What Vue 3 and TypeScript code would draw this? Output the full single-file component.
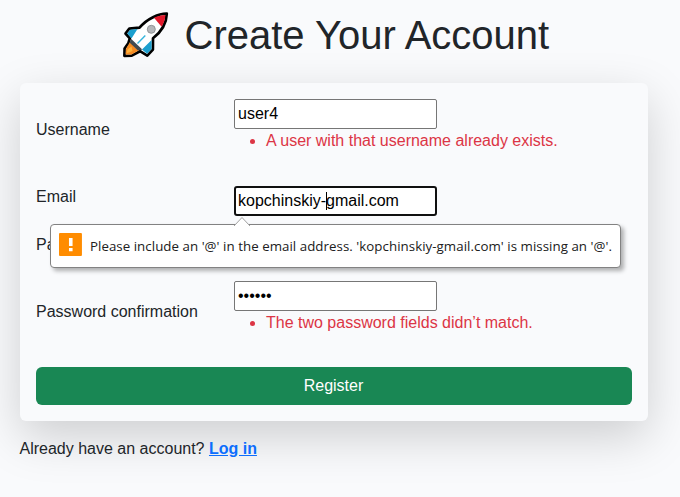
<script setup lang="ts">
import { ref } from 'vue'

const username = ref<string>('user4')
const email = ref<string>('kopchinskiy-gmail.com')
const password = ref<string>('')
const confirmation = ref<string>('secret')
const hint = "Please include an '@' in the email address. 'kopchinskiy-gmail.com' is missing an '@'."
</script>

<template>
  <main class="page">
    <h1 class="title">
      <svg class="rocket" viewBox="0 0 50 50" aria-hidden="true">
        <path d="M45.800 3.600 C38 3.500 26 8.500 18.500 17.700 L8.300 18.600 L4.500 23.500 L8.800 28.300 L7.300 33.300 L3.600 38.500 L3.400 45.800 L10.800 45.600 L19 41.200 L26.300 45.600 L31.900 39.600 L32 28.300 C40 22 45.500 13 45.800 3.600 Z" fill="#fff" stroke="#000" stroke-width="2.700" stroke-linejoin="round" />
        <path d="M16.500 19 L9.200 19.700 L6.200 23.500 L10.500 28.500 Z M30.600 30 L30.600 39 L26.100 43.800 L21 39.500 Z" fill="#1c9fce" />
        <path d="M9 32 L18 40.200 L10.500 44.400 L4.700 44.500 L4.900 39 Z" fill="#f58a22" />
        <path d="M10 28.700 L21.300 39.500 L19 40.300 L17 40.500 L8.700 32.700 Z" fill="#414a51" />
        <path d="M6.500 39.500 L10.500 36.500 L11.500 41 L5.500 43.500 Z" fill="#ffb43c" />
        <path d="M33 7.800 C37 5.800 41 5.100 44.400 5 C44.200 9 42.900 13 40.600 16.800 Z" fill="#e2182b" />
        <circle cx="30.300" cy="19.300" r="4" fill="#b5b7ba" stroke="#929497" stroke-width="1" />
        <path d="M16.500 33.500 L24.300 25.600" stroke="#35b5dc" stroke-width="1.400" />
      </svg>
      <span class="title-text">Create Your Account</span>
    </h1>

    <form class="card" @submit.prevent>
      <div class="row row-user">
        <label for="username">Username</label>
        <div class="control">
          <input id="username" v-model="username" type="text">
          <ul class="errors"><li>A user with that username already exists.</li></ul>
        </div>
      </div>
      <div class="row row-email">
        <label for="email">Email</label>
        <div class="control">
          <input id="email" v-model="email" class="active" type="text">
          <span class="caret"></span>
          <div class="bubble" role="alert">
            <svg class="arrow" viewBox="0 0 18 10" aria-hidden="true">
              <path d="M1 10 L9 1.500 L17 10" fill="#fff" stroke="#a0a0a0" />
            </svg>
            <svg class="warn" viewBox="0 0 23 23" aria-hidden="true">
              <rect width="23" height="23" rx="1" fill="#ff8c00" />
              <path d="M10 5h3.600v8H10z M10 15h3.600v3.200H10z" fill="#fff" />
            </svg>
            <span class="hint">{{ hint }}</span>
          </div>
        </div>
      </div>
      <div class="row row-password">
        <label for="password">Password</label>
        <div class="control"><input id="password" v-model="password" type="password"></div>
      </div>
      <div class="row row-confirm">
        <label for="confirmation">Password confirmation</label>
        <div class="control">
          <input id="confirmation" v-model="confirmation" type="password">
          <ul class="errors"><li>The two password fields didn’t match.</li></ul>
        </div>
      </div>
      <button class="register" type="submit">Register</button>
    </form>
    <p class="login">Already have an account? <a href="#">Log in</a></p>
  </main>
</template>

<style>
body {
  margin: 0;
  background: #f9fafc;
}
</style>

<style scoped>
* {
  box-sizing: border-box;
}
.page {
  height: 497px;
  overflow: hidden;
  padding: 11px 32px 0 19.5px;
  background: #f9fafc;
  color: #212529;
  font: 16px/24px "Liberation Sans", Arial, sans-serif;
}
.title {
  display: flex;
  align-items: center;
  height: 48px;
  margin: 0 0 24px 101.5px;
  font-size: 40px;
  font-weight: 400;
  line-height: 48px;
}
.rocket {
  width: 50px;
  height: 50px;
  margin-right: 13.5px;
}
.title-text {
  white-space: nowrap;
}
.card {
  height: 338px;
  margin-left: .5px;
  padding: 16px;
  border-radius: 6px;
  background: #f9fafc;
  box-shadow: 0 16px 48px rgba(0, 0, 0, .175);
}
.row {
  display: grid;
  grid-template-columns: 198px 1fr;
  align-items: start;
}
.row-user {
  height: 86px;
}
.row-user label,
.row-confirm label {
  padding-top: 19px;
}
.row-email {
  height: 48px;
}
.row-email .control {
  top: 1px;
}
.row-password {
  height: 48px;
}
.row-password .control {
  padding-top: 1px;
}
.row-confirm {
  height: 86px;
}
.control {
  position: relative;
}
input {
  display: block;
  width: 203px;
  height: 30px;
  padding: 1px 3px;
  border: 1px solid #767676;
  border-radius: 2px;
  outline: 0;
  background: #fff;
  color: #000;
  font: 16px "Liberation Sans", Arial, sans-serif;
}
#confirmation {
  padding-bottom: 2px;
}
input.active {
  padding: 0 2px;
  border: 2px solid #101010;
  border-radius: 3px;
}
.caret {
  position: absolute;
  left: 92px;
  top: 6px;
  width: 1px;
  height: 18px;
  background: #000;
}
.errors {
  margin: 0;
  padding-left: 32px;
  color: #dc3545;
}
.bubble {
  position: absolute;
  z-index: 2;
  left: -184px;
  top: 38px;
  display: flex;
  align-items: center;
  width: 571px;
  height: 44px;
  padding: 0 8px;
  border: 1px solid #828282;
  border-radius: 4px;
  background: #fff;
  box-shadow: 3px 3px 4px rgba(0, 0, 0, .3);
}
.arrow {
  position: absolute;
  left: 182px;
  top: -9px;
  width: 18px;
  height: 10px;
}
.warn {
  width: 23px;
  height: 23px;
  margin: -3px 8px 0 0;
}
.hint {
  color: #202020;
  font: 13.3px/20px "Open Sans", "Noto Sans", sans-serif;
  letter-spacing: .045px;
  white-space: nowrap;
}
.register {
  display: block;
  width: 100%;
  height: 38px;
  padding: 0 1px 0 0;
  border: 0;
  border-radius: 6px;
  background: #198754;
  color: #fff;
  font: 16px/24px "Liberation Sans", Arial, sans-serif;
}
.login {
  margin: 16px 0 0;
}
.login a {
  color: #0d6efd;
  font-weight: 700;
  text-decoration: underline;
}
</style>
